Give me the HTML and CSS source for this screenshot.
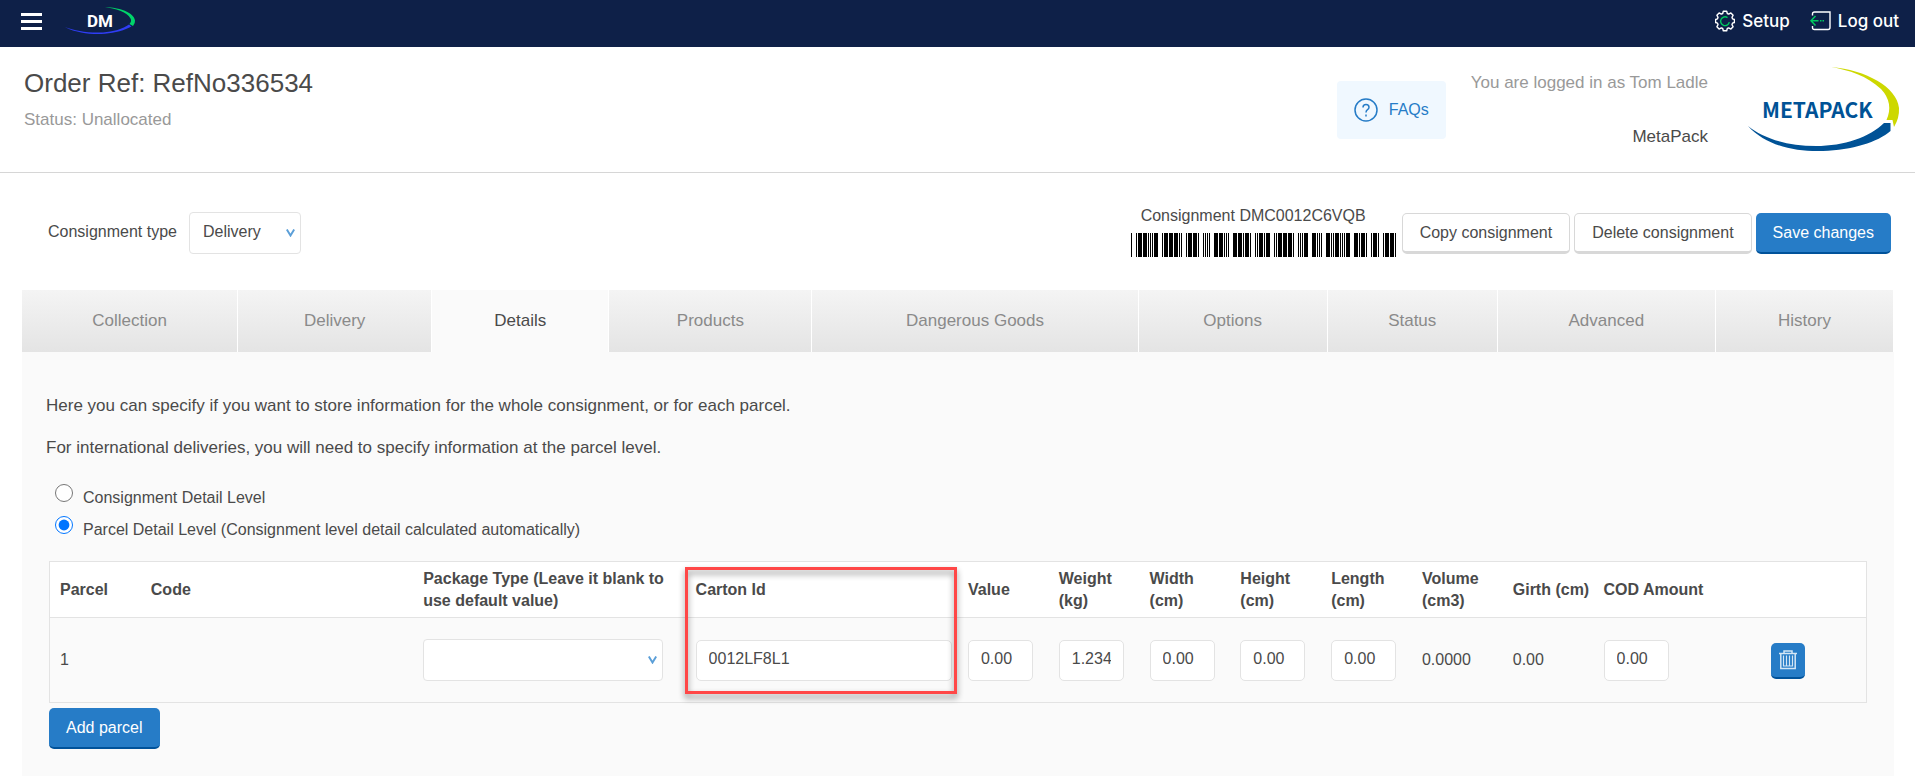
FILE: index.html
```html
<!DOCTYPE html>
<html lang="en">
<head>
<meta charset="utf-8">
<title>Order Ref: RefNo336534</title>
<link rel="stylesheet" href="styles.css">
</head>
<body>
<nav class="topbar">
  <button class="menu-btn" type="button" aria-label="Menu"><span></span><span></span><span></span></button>
  <a class="brand" href="#" aria-label="DM home">
    <svg width="72" height="32" viewBox="0 0 72 32">
      <path d="M40 2.2C53 2 69 7 70 15.500Q70.300 18.500 68 21L64.500 19Q67 16 65.500 13.500C62 6.500 50 3.500 40 2.200Z" fill="#00d46a"/>
      <path d="M0 22C13 29 29 29.500 40 28.700C50 28 60 25 66.500 21.500L64 19.500C58 24 48 26.800 38 27.400C24 28.200 10 26 0 22Z" fill="#2f3df5"/>
      <text class="brand-text" x="22" y="22">DM</text>
    </svg>
  </a>
  <a class="top-link top-link-first" href="#">
    <svg width="20" height="22" viewBox="0 0 20 22" fill="none" stroke-width="1.400">
      <path stroke="#fff" stroke-linejoin="round" d="M8.300 1.200H11.700L12.300 3.500L13.700 4.100L15.900 2.900L18.100 5.200L17 7.400L17.500 8.800L19.400 9.500V12.500L17.500 13.200L17 14.600L18.100 16.800L15.900 19.100L13.700 17.900L12.300 18.500L11.700 20.800H8.300L7.700 18.500L6.300 17.900L4.100 19.100L1.900 16.800L3 14.600L2.500 13.200L.6 12.500V9.500L2.500 8.800L3 7.400L1.900 5.200L4.100 2.900L6.300 4.100L7.700 3.500Z"/>
      <path stroke="#00c95f" d="M12.500 7.600A4.400 4.400 0 1 0 14.300 12.200"/>
    </svg>
    <span>Setup</span>
  </a>
  <a class="top-link" href="#">
    <svg width="21" height="20" viewBox="0 0 21 20" fill="none">
      <path stroke="#fff" stroke-width="1.400" d="M2.500 4.500V3Q2.500 1 4.500 1H20V16.500Q20 18.500 18 18.500H4.500Q2.500 18.500 2.500 16.500V15"/>
      <path stroke="#00c95f" stroke-width="1.500" d="M5.500 5L1 9.700L5.500 14.400M1 9.700H8.500M10 9.700H11.500M12.500 9.700H14"/>
    </svg>
    <span>Log out</span>
  </a>
</nav>

<header class="header">
  <div class="order">
    <h1 class="order-title">Order Ref: RefNo336534</h1>
    <p class="order-status">Status: Unallocated</p>
  </div>
  <a class="faqs" href="#">
    <svg width="24" height="24" viewBox="0 0 24 24" fill="none" stroke="#267cc7" stroke-width="1.500">
      <circle cx="12" cy="12" r="11"/>
      <path d="M9 9.500Q9 6.500 12 6.500T15 9.300Q15 10.800 13.500 11.700Q12 12.600 12 14.500M12 16.500V18.500"/>
    </svg>
    <span>FAQs</span>
  </a>
  <div class="account">
    <p class="account-user">You are logged in as Tom Ladle</p>
    <p class="account-org">MetaPack</p>
  </div>
  <svg class="logo" width="152" height="85" viewBox="0 0 152 85" role="img" aria-label="Metapack">
    <path d="M83 0C118 3 149 20 151 41Q151.500 51 146 60L144.500 53H138.500Q146 36 133 22C119 9 101 3 83 0Z" fill="#cdd800"/>
    <path d="M0 59C18 79 48 85 75 84C104 83 130 75 142.500 64V56H136C122 70 96 79 68 79C38 79 15 71 0 59Z" fill="#005296"/>
    <text class="logo-text" x="14" y="51">METAPACK</text>
  </svg>
</header>

<main class="main">
  <div class="toolbar">
    <label class="toolbar-label" for="ctype">Consignment type</label>
    <span class="select select-type">
      <select id="ctype"><option>Delivery</option></select>
      <svg class="chevron" width="9" height="8" viewBox="0 0 9 8"><path d="M.8 .5L4.500 6.500L8.200 .5" fill="none" stroke="#5b9fd8" stroke-width="2"/></svg>
    </span>
    <div class="consignment">
      <span class="consignment-code">Consignment DMC0012C6VQB</span>
      <svg class="barcode" data-code="DMC0012C6VQB" width="265" height="24" shape-rendering="crispEdges"></svg>
    </div>
    <div class="actions">
      <button class="btn btn-plain" type="button">Copy consignment</button>
      <button class="btn btn-plain" type="button">Delete consignment</button>
      <button class="btn btn-primary" type="button">Save changes</button>
    </div>
  </div>

  <section class="panel">
    <div class="tabs" role="tablist">
      <button class="tab" role="tab" type="button">Collection</button>
      <button class="tab" role="tab" type="button">Delivery</button>
      <button class="tab tab-active" role="tab" type="button" aria-selected="true">Details</button>
      <button class="tab" role="tab" type="button">Products</button>
      <button class="tab" role="tab" type="button">Dangerous Goods</button>
      <button class="tab" role="tab" type="button">Options</button>
      <button class="tab" role="tab" type="button">Status</button>
      <button class="tab" role="tab" type="button">Advanced</button>
      <button class="tab" role="tab" type="button">History</button>
    </div>
    <div class="panel-body">
      <p class="note">Here you can specify if you want to store information for the whole consignment, or for each parcel.</p>
      <p class="note">For international deliveries, you will need to specify information at the parcel level.</p>
      <div class="levels">
        <div class="level"><input type="radio" name="level" id="lvl-c"><label for="lvl-c">Consignment Detail Level</label></div>
        <div class="level"><input type="radio" name="level" id="lvl-p" checked><label for="lvl-p">Parcel Detail Level (Consignment level detail calculated automatically)</label></div>
      </div>
      <table class="parcels">
        <colgroup>
          <col class="c1"><col class="c3"><col class="c3"><col class="c3"><col class="c1"><col class="c1"><col class="c1"><col class="c1"><col class="c1"><col class="c1"><col class="c1"><col class="c-cod"><col class="c-del">
        </colgroup>
        <thead>
          <tr>
            <th>Parcel</th>
            <th>Code</th>
            <th>Package Type (Leave it blank to use default value)</th>
            <th class="marked">Carton Id<span class="marker"></span></th>
            <th>Value</th>
            <th>Weight (kg)</th>
            <th>Width (cm)</th>
            <th>Height (cm)</th>
            <th>Length (cm)</th>
            <th>Volume (cm3)</th>
            <th class="nowrap">Girth (cm)</th>
            <th class="nowrap">COD Amount</th>
            <th></th>
          </tr>
        </thead>
        <tbody>
          <tr>
            <td>1</td>
            <td></td>
            <td>
              <span class="select select-pack">
                <select aria-label="Package Type"><option></option></select>
                <svg class="chevron" width="9" height="8" viewBox="0 0 9 8"><path d="M.8 .5L4.500 6.500L8.200 .5" fill="none" stroke="#5b9fd8" stroke-width="2"/></svg>
              </span>
            </td>
            <td><input class="field field-wide" type="text" aria-label="Carton Id" value="0012LF8L1"></td>
            <td><input class="field" type="text" aria-label="Value" value="0.00"></td>
            <td><input class="field" type="text" aria-label="Weight (kg)" value="1.234"></td>
            <td><input class="field" type="text" aria-label="Width (cm)" value="0.00"></td>
            <td><input class="field" type="text" aria-label="Height (cm)" value="0.00"></td>
            <td><input class="field" type="text" aria-label="Length (cm)" value="0.00"></td>
            <td>0.0000</td>
            <td>0.00</td>
            <td><input class="field" type="text" aria-label="COD Amount" value="0.00"></td>
            <td class="delete-cell">
              <button class="btn btn-primary btn-icon" type="button" aria-label="Delete parcel">
                <svg width="20" height="20" viewBox="0 0 20 20" fill="none" stroke="#d4e6f5">
                  <path stroke-width="1.500" d="M1 3.500H19M6 3V1H14V3"/>
                  <path stroke-width="1.500" d="M2.800 4V18.500H17.200V4"/>
                  <path stroke-width="1.200" d="M5.500 5.500V16H14.500V5.500M8.500 5.500V16M11.500 5.500V16"/>
                </svg>
              </button>
            </td>
          </tr>
        </tbody>
      </table>
      <button class="btn btn-primary" type="button">Add parcel</button>
    </div>
  </section>
</main>
<script src="barcode.js"></script>
</body>
</html>
```

FILE: styles.css
```css
* { box-sizing: border-box; }

body {
  margin: 0;
  background: #fff;
  color: #4a4a4a;
  font: 16px/22px "Liberation Sans", Arial, sans-serif;
}

p, h1 { margin: 0; }

button, input, select { font: inherit; color: inherit; }

a { text-decoration: none; }

/* Top bar */
.topbar {
  display: flex;
  align-items: center;
  height: 47px;
  padding: 0 16px 5px 21px;
  background: #0e2048;
}

.menu-btn {
  display: flex;
  flex-direction: column;
  gap: 4px;
  width: 21px;
  padding: 0;
  border: 0;
  background: none;
}

.menu-btn span { height: 3px; background: #fff; }

.brand { margin-left: 23px; height: 32px; }
.brand svg { display: block; }

.brand-text {
  fill: #fff;
  font: bold 17px Roboto, sans-serif;
}

.top-link {
  display: flex;
  align-items: center;
  gap: 7px;
  margin-left: 20px;
  color: #fff;
  font: 500 17px/22px Inter, sans-serif;
}

.top-link-first { margin-left: auto; }

/* Page header */
.header {
  display: flex;
  align-items: flex-start;
  padding: 20px 15px 20px 24px;
  border-bottom: 1px solid #d6d6d6;
}

.order { flex: 1; }
.order-title { font-size: 26px; line-height: 32px; font-weight: normal; }
.order-status { margin-top: 10px; color: #999; font-size: 17px; }

.faqs {
  display: flex;
  align-items: center;
  gap: 11px;
  height: 58px;
  margin-top: 14px;
  padding: 0 17px;
  border-radius: 4px;
  background: #f0f8ff;
  color: #267cc7;
}

.account { margin: 5px 0 0 25px; text-align: right; font-size: 17px; }
.account-user { color: #999; }
.account-org { margin-top: 32px; }

.logo { margin-left: 40px; }

.logo-text {
  fill: #005296;
  font: bold 21px "Noto Sans CJK SC", sans-serif;
}

/* Toolbar */
.main { padding: 39px 21px 0 22px; }

.toolbar {
  display: flex;
  align-items: flex-start;
  padding: 0 3px 33px 26px;
}

.toolbar-label { margin: 9px 12px 0 0; }

.select { position: relative; display: block; }

.select select {
  display: block;
  appearance: none;
  width: 100%;
  height: 42px;
  padding: 0 13px 2px;
  border: 1px solid #e3e3e3;
  border-radius: 4px;
  background: #fff;
}

.select-type { width: 112px; }
.select-pack { width: 240px; }

.chevron { position: absolute; right: 6px; top: 17px; pointer-events: none; }

.consignment {
  display: flex;
  flex-direction: column;
  align-items: center;
  margin: -7px 6px 0 auto;
}

.consignment-code { padding-right: 20px; }

.barcode { margin-top: 6px; }

.actions { display: flex; gap: 4px; padding-top: 1px; }

.btn {
  height: 41px;
  padding: 0 17px;
  border: 0;
  border-radius: 5px;
}

.btn-plain {
  border: 1px solid #d8d8d8;
  border-bottom-width: 3px;
  background: #fff;
}

.btn-primary {
  background: #267cc7;
  border-bottom: 2px solid #00529a;
  color: #fff;
}

/* Tabs */
.panel { background: #fafafa; padding-bottom: 27px; }

.tabs {
  display: grid;
  grid-template-columns: 216fr 194fr 177fr 203fr 326fr 189fr 170fr 218fr 178fr;
}

.tab {
  height: 62px;
  padding: 0;
  border: 0;
  border-right: 1px solid #fff;
  background: linear-gradient(#f4f4f4, #e4e4e4);
  color: #8a8a8a;
  font-size: 17px;
}

.tab-active { background: #fafafa; color: #4a4a4a; }

/* Detail panel */
.panel-body { padding: 43px 27px 0; }

.note { margin: 0 -3px 20px; font-size: 17px; }

.levels { padding: 5px 0 13px 3px; }

.level { display: flex; align-items: flex-start; height: 32px; }

.level input { width: 18px; height: 18px; margin: 0 10px 0 3px; }

.level label { padding-top: 3px; }

.parcels {
  width: 100%;
  margin-bottom: 5px;
  border: 1px solid #e3e3e3;
  border-spacing: 0;
  table-layout: fixed;
}

.c1 { width: 5%; }
.c3 { width: 15%; }
.c-cod { width: 6%; }
.c-del { width: 9%; }

.parcels th {
  height: 56px;
  padding: 0 0 0 10px;
  border-bottom: 1px solid #e3e3e3;
  background: #fff;
  text-align: left;
}

.parcels td { height: 84px; padding: 0 0 0 10px; }

.nowrap { white-space: nowrap; }

.marked { position: relative; }

.marker {
  position: absolute;
  z-index: 1;
  left: -1px;
  right: 1px;
  top: 5px;
  height: 127px;
  border: 3px solid #ff4747;
  filter: drop-shadow(0 4px 3px rgba(0, 0, 0, .45));
  pointer-events: none;
}

.field {
  display: block;
  width: 65px;
  height: 41px;
  padding: 0 12px 2px;
  border: 1px solid #e3e3e3;
  border-radius: 5px;
  background: #fff;
}

.field-wide { width: 256px; }

.parcels .delete-cell { padding: 2px 0 0 7px; text-align: center; }

.btn-icon { width: 34px; height: 36px; padding: 0; vertical-align: middle; }
.btn-icon svg { display: block; margin: 0 auto; }
```

FILE: barcode.js
```js
// Code 39: nine elements per character, bars and spaces in turn.
const PATTERNS = {
  '0': 'nnnwwnwnn', '1': 'wnnwnnnnw', '2': 'nnwwnnnnw', '6': 'nnwwwnnnn',
  'B': 'nnwnnwnnw', 'C': 'wnwnnwnnn', 'D': 'nnnnwwnnw', 'M': 'wnwnnnnwn',
  'Q': 'nnnnnnwww', 'V': 'nwwnnnnnw', '*': 'nwnnwnwnn'
};

document.querySelectorAll('.barcode').forEach(svg => {
  let x = 0;
  let d = '';
  for (const ch of '*' + svg.dataset.code + '*') {
    [...PATTERNS[ch]].forEach((e, i) => {
      const w = e === 'w' ? 4 : 1;
      if (i % 2 === 0) d += `M${x} 0h${w}v24h-${w}z`;
      x += w;
    });
    x += 1;
  }
  const path = document.createElementNS('http://www.w3.org/2000/svg', 'path');
  path.setAttribute('d', d);
  svg.appendChild(path);
});
```
